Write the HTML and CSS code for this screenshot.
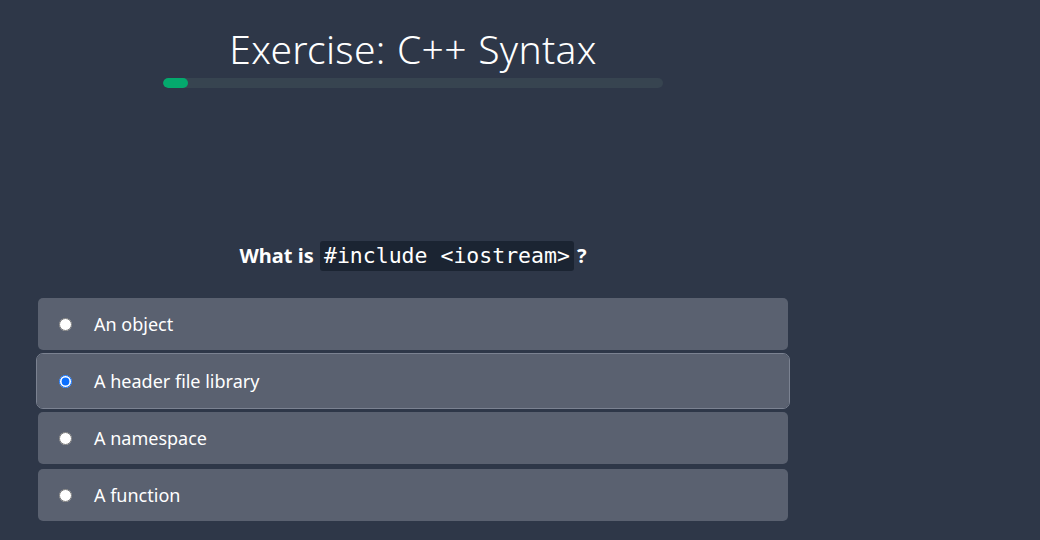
FILE: index.html
```html
<!DOCTYPE html>
<html lang="en">
<head>
<meta charset="utf-8">
<title>Exercise: C++ Syntax</title>
<link rel="stylesheet" href="styles.css">
</head>
<body>
<main class="quiz">
  <header class="head">
    <h1 class="title">Exercise: C++ Syntax</h1>
    <div class="progress"><div class="progress-fill" style="width:5%"></div></div>
  </header>
  <section class="question">
    <p class="prompt">What is <code class="code">#include &lt;iostream&gt;</code>?</p>
    <div class="options">
      <label class="option"><input type="radio" name="q" class="radio"><span>An object</span></label>
      <label class="option selected"><input type="radio" name="q" class="radio" checked><span>A header file library</span></label>
      <label class="option"><input type="radio" name="q" class="radio"><span>A namespace</span></label>
      <label class="option"><input type="radio" name="q" class="radio"><span>A function</span></label>
    </div>
  </section>
</main>
</body>
</html>
```

FILE: styles.css
```css
* { box-sizing: border-box; }
html, body { margin: 0; padding: 0; }
body {
  background: #2e3748;
  color: #ffffff;
  font-family: "Noto Sans", "Open Sans", sans-serif;
  width: 1040px;
  height: 540px;
  overflow: hidden;
}
.quiz {
  width: 750px;
  margin-left: 38px;
  padding-top: 24px;
}
.head {
  display: flex;
  flex-direction: column;
  align-items: center;
}
.title {
  margin: 0;
  font-weight: 300;
  font-size: 39px;
  line-height: 50px;
  letter-spacing: 0.3px;
  word-spacing: 1px;
}
.plus { letter-spacing: 2px; }
.progress {
  width: 500px;
  height: 10px;
  border-radius: 5px;
  background: #374450;
  margin-top: 4px;
  overflow: hidden;
}
.progress-fill {
  height: 100%;
  background: #04a96d;
  border-radius: 5px;
}
.question { margin-top: 153px; }
.prompt {
  margin: 0 0 27px;
  text-align: center;
  font-weight: 700;
  font-size: 20px;
  line-height: 30px;
}
.code {
  font-family: "DejaVu Sans Mono", monospace;
  font-weight: 400;
  font-size: 21.5px;
  background: #1b2432;
  padding: 0 4px;
  border-radius: 3px;
  display: inline-block;
  line-height: 30px;
  margin: 0 3px 0 1px;
}
.options {
  display: flex;
  flex-direction: column;
  gap: 5px;
}
.option {
  display: flex;
  align-items: center;
  height: 52px;
  padding-left: 21px;
  background: #5a6170;
  border-radius: 5px;
  font-size: 18px;
  cursor: pointer;
}
.option.selected {
  outline: 1px solid #7b8291;
  outline-offset: 1px;
  box-shadow: 0 0 0 1px #5a6170;
  border-radius: 5px;
}
.radio {
  width: 13px;
  height: 13px;
  margin: 0 22px 0 0;
  accent-color: #0b6fff;
}
```
